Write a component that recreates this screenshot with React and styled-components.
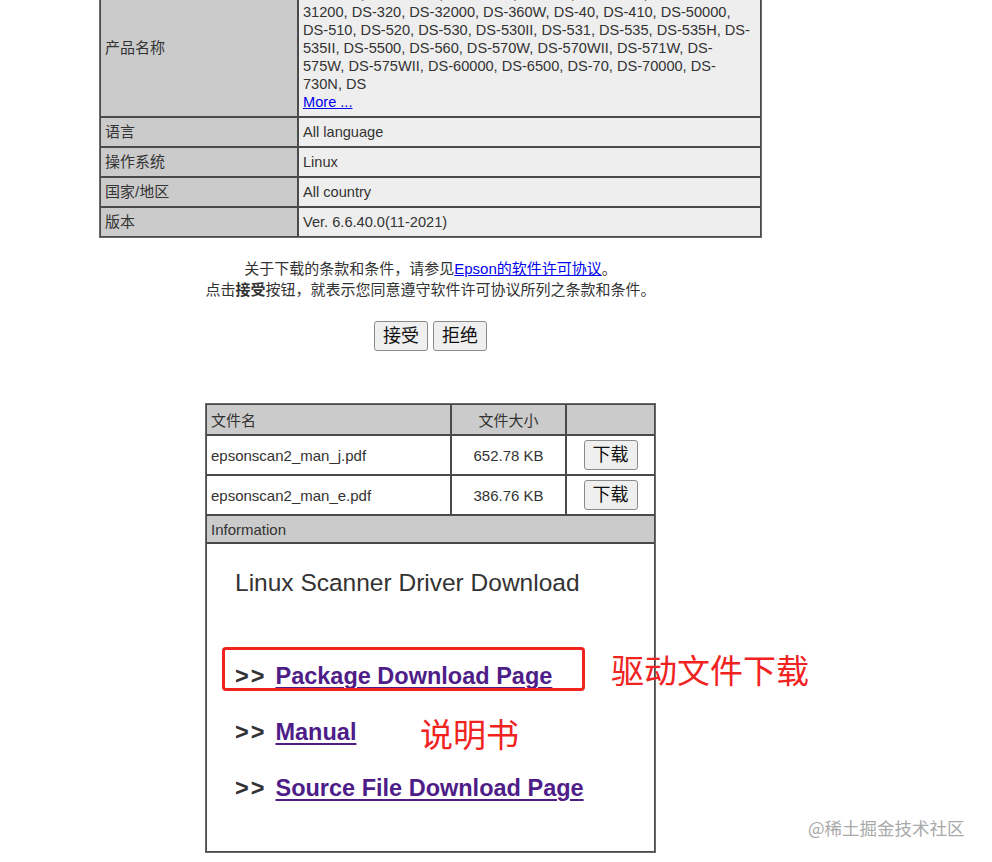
import React from "react";
import styled, { createGlobalStyle } from "styled-components";

const GlobalStyle = createGlobalStyle`
  html, body { margin: 0; padding: 0; background: #fff; }
  body {
    font-family: "Liberation Sans", "Noto Sans CJK SC", sans-serif;
    color: #333;
  }
`;

const Screen = styled.div`
  position: relative;
  width: 992px;
  height: 862px;
  overflow: hidden;
`;

const Page = styled.div`
  width: 861px;
  display: flex;
  flex-direction: column;
  align-items: center;
  margin-top: -22px;
`;

const InfoTable = styled.table`
  width: 663px;
  border-collapse: separate;
  border-spacing: 0;
  border: 1px solid #6a6a6a;
`;

const Label = styled.td`
  width: 188px;
  background: #cbcbcb;
  border: 1px solid #4a4a4a;
  padding: 5px 4px;
  font-size: 15px;
  line-height: 18px;
  vertical-align: middle;
`;

const Value = styled.td`
  background: #eeeeee;
  border: 1px solid #4a4a4a;
  padding: 5px 4px;
  font-size: 14.6px;
  line-height: 18px;
  white-space: nowrap;
  vertical-align: middle;
`;

const BlueLink = styled.a`
  color: #0000ee;
  text-decoration: underline;
`;

const Notice = styled.p`
  margin: 20px 0 0;
  font-size: 15px;
  line-height: 21px;
  text-align: center;
`;

const ButtonRow = styled.div`
  display: flex;
  gap: 5px;
  margin-top: 21px;
`;

const NativeButton = styled.button`
  font-family: "Liberation Sans", "Noto Sans CJK SC", sans-serif;
  font-size: 18px;
  height: 30px;
  padding: 0 8px;
  background: #efefef;
  color: #111;
  border: 1px solid #8a8a8a;
  border-radius: 3px;
  line-height: 28px;
`;

const FileTable = styled.table`
  width: 451px;
  margin-top: 52px;
  border-collapse: separate;
  border-spacing: 0;
  border: 1px solid #6a6a6a;
  font-size: 15px;
`;

const HeadCell = styled.td`
  background: #cbcbcb;
  border: 1px solid #4a4a4a;
  padding: 0 4px;
  height: ${(p) => p.$h || 29}px;
  text-align: ${(p) => p.$align || "left"};
  width: ${(p) => p.$w || "auto"};
`;

const Cell = styled.td`
  background: #fff;
  border: 1px solid #4a4a4a;
  padding: 0 4px;
  height: 38px;
  text-align: ${(p) => p.$align || "left"};
`;

const InfoBody = styled.td`
  background: #fff;
  border: 1px solid #4a4a4a;
  padding: 24px 28px 48px;
  vertical-align: top;
`;

const Title = styled.div`
  font-size: 24.5px;
  line-height: 30px;
  color: #333;
`;

const LinkList = styled.div`
  display: flex;
  flex-direction: column;
  gap: 26px;
  margin-top: 63px;
`;

const LinkRow = styled.div`
  position: relative;
  font-size: 23.5px;
  font-weight: bold;
  line-height: 30px;
  color: #333;
  white-space: nowrap;
`;

const Arrow = styled.span`
  letter-spacing: 2px;
  margin-right: 9px;
`;

const PurpleLink = styled.a`
  color: #4e1d88;
  text-decoration: underline;
  text-decoration-thickness: 2px;
  text-underline-offset: 3px;
`;

const RedBox = styled.div`
  position: absolute;
  left: -13px;
  top: -14px;
  width: 357px;
  height: 38px;
  border: 3px solid #f0231f;
  border-radius: 4px;
`;

const Annotation = styled.div`
  position: absolute;
  left: ${(p) => p.$left}px;
  top: ${(p) => p.$top}px;
  font-family: "Noto Sans CJK SC", sans-serif;
  font-weight: normal;
  font-size: 33px;
  line-height: 40px;
  color: #f0231f;
`;

const Watermark = styled.div`
  position: absolute;
  left: 808px;
  top: 817px;
  font-family: "Noto Sans CJK SC", sans-serif;
  font-size: 17.5px;
  line-height: 22px;
  color: #a9a9a9;
`;

const products = [
  "DS-1630, DS-1660W, DS-30000, DS-310, DS-31100, DS-",
  "31200, DS-320, DS-32000, DS-360W, DS-40, DS-410, DS-50000,",
  "DS-510, DS-520, DS-530, DS-530II, DS-531, DS-535, DS-535H, DS-",
  "535II, DS-5500, DS-560, DS-570W, DS-570WII, DS-571W, DS-",
  "575W, DS-575WII, DS-60000, DS-6500, DS-70, DS-70000, DS-",
  "730N, DS",
];

const rows = [
  ["语言", "All language"],
  ["操作系统", "Linux"],
  ["国家/地区", "All country"],
  ["版本", "Ver. 6.6.40.0(11-2021)"],
];

const files = [
  ["epsonscan2_man_j.pdf", "652.78 KB"],
  ["epsonscan2_man_e.pdf", "386.76 KB"],
];

export default function App() {
  return (
    <>
      <GlobalStyle />
      <Screen>
        <Page>
          <InfoTable>
            <tbody>
              <tr>
                <Label>产品名称</Label>
                <Value>
                  {products.map((l, i) => (
                    <React.Fragment key={i}>
                      {l}
                      <br />
                    </React.Fragment>
                  ))}
                  <BlueLink href="#">More ...</BlueLink>
                </Value>
              </tr>
              {rows.map(([k, v]) => (
                <tr key={k}>
                  <Label>{k}</Label>
                  <Value>{v}</Value>
                </tr>
              ))}
            </tbody>
          </InfoTable>

          <Notice>
            关于下载的条款和条件，请参见<BlueLink href="#">Epson的软件许可协议</BlueLink>。
            <br />
            点击<b>接受</b>按钮，就表示您同意遵守软件许可协议所列之条款和条件。
          </Notice>

          <ButtonRow>
            <NativeButton>接受</NativeButton>
            <NativeButton>拒绝</NativeButton>
          </ButtonRow>

          <FileTable>
            <tbody>
              <tr>
                <HeadCell $w="235px">文件名</HeadCell>
                <HeadCell $w="105px" $align="center">文件大小</HeadCell>
                <HeadCell />
              </tr>
              {files.map(([n, s]) => (
                <tr key={n}>
                  <Cell>{n}</Cell>
                  <Cell $align="center">{s}</Cell>
                  <Cell $align="center">
                    <NativeButton>下载</NativeButton>
                  </Cell>
                </tr>
              ))}
              <tr>
                <HeadCell colSpan={3} $h={26}>Information</HeadCell>
              </tr>
              <tr>
                <InfoBody colSpan={3}>
                  <Title>Linux Scanner Driver Download</Title>
                  <LinkList>
                    <LinkRow>
                      <RedBox />
                      <Arrow>&gt;&gt;</Arrow>
                      <PurpleLink href="#">Package Download Page</PurpleLink>
                      <Annotation $left={376} $top={-12}>驱动文件下载</Annotation>
                    </LinkRow>
                    <LinkRow>
                      <Arrow>&gt;&gt;</Arrow>
                      <PurpleLink href="#">Manual</PurpleLink>
                      <Annotation $left={185} $top={-4}>说明书</Annotation>
                    </LinkRow>
                    <LinkRow>
                      <Arrow>&gt;&gt;</Arrow>
                      <PurpleLink href="#">Source File Download Page</PurpleLink>
                    </LinkRow>
                  </LinkList>
                </InfoBody>
              </tr>
            </tbody>
          </FileTable>
        </Page>
        <Watermark>@稀土掘金技术社区</Watermark>
      </Screen>
    </>
  );
}
